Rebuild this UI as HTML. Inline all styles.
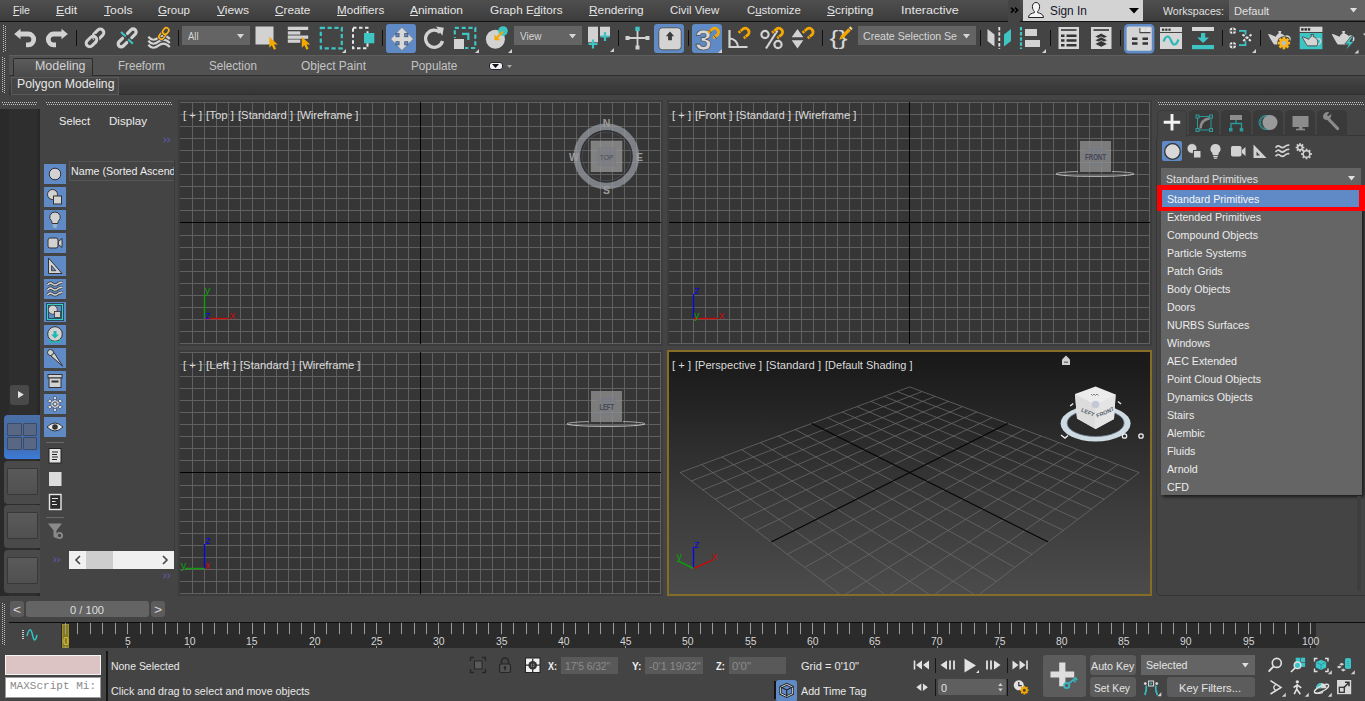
<!DOCTYPE html>
<html><head><meta charset="utf-8"><title>3ds Max</title>
<style>
html,body{margin:0;padding:0;background:#444;}
body{width:1365px;height:701px;position:relative;overflow:hidden;font-family:"Liberation Sans",sans-serif;font-size:12px;color:#dedede;}
div,span.t,svg{position:absolute;box-sizing:border-box;}
span.t{white-space:nowrap;line-height:1.15;transform-origin:0 0;display:block;}
svg{overflow:visible;}
.sec{left:0;top:0;width:0;height:0;}
u{text-decoration:underline;text-underline-offset:1px;}
</style></head><body>
<div class="sec" id="menubar">
<div style="left:0px;top:0px;width:1365px;height:21px;background:linear-gradient(#4f4f4f,#3c3c3c);"></div>
<div style="left:0px;top:21px;width:1008px;height:1px;background:#111;"></div>
<div style="left:1008px;top:0px;width:12px;height:22px;background:#444;"></div>
<div style="left:1020px;top:21px;width:345px;height:1px;background:#111;"></div>
<span class="t" style="left:12.8px;top:4px;font-size:11.5px;color:#e4e4e4;transform:scaleX(0.912)"><u>F</u>ile</span>
<span class="t" style="left:55.6px;top:4px;font-size:11.5px;color:#e4e4e4;transform:scaleX(1.070)"><u>E</u>dit</span>
<span class="t" style="left:103.5px;top:4px;font-size:11.5px;color:#e4e4e4;transform:scaleX(1.062)"><u>T</u>ools</span>
<span class="t" style="left:158.4px;top:4px;font-size:11.5px;color:#e4e4e4;transform:scaleX(1.001)"><u>G</u>roup</span>
<span class="t" style="left:217.4px;top:4px;font-size:11.5px;color:#e4e4e4;transform:scaleX(1.050)"><u>V</u>iews</span>
<span class="t" style="left:275.4px;top:4px;font-size:11.5px;color:#e4e4e4;transform:scaleX(1.026)"><u>C</u>reate</span>
<span class="t" style="left:337px;top:4px;font-size:11.5px;color:#e4e4e4;transform:scaleX(1.012)"><u>M</u>odifiers</span>
<span class="t" style="left:410px;top:4px;font-size:11.5px;color:#e4e4e4;transform:scaleX(1.036)"><u>A</u>nimation</span>
<span class="t" style="left:490.3px;top:4px;font-size:11.5px;color:#e4e4e4;transform:scaleX(1.022)">Graph E<u>d</u>itors</span>
<span class="t" style="left:589px;top:4px;font-size:11.5px;color:#e4e4e4;transform:scaleX(1.031)"><u>R</u>endering</span>
<span class="t" style="left:670.3px;top:4px;font-size:11.5px;color:#e4e4e4;transform:scaleX(0.991)">Civil View</span>
<span class="t" style="left:746.5px;top:4px;font-size:11.5px;color:#e4e4e4;transform:scaleX(0.992)">C<u>u</u>stomize</span>
<span class="t" style="left:827.4px;top:4px;font-size:11.5px;color:#e4e4e4;transform:scaleX(1.039)"><u>S</u>cripting</span>
<span class="t" style="left:900.8px;top:4px;font-size:11.5px;color:#e4e4e4;transform:scaleX(1.088)">Interactive</span>
<svg style="left:1009.500px;top:7.200px" width="10" height="7" viewBox="0 0 10 7"><path d="M1 .600l2.700 2.500-2.700 2.500M5 .600l2.700 2.500-2.700 2.500" fill="none" stroke="#000" stroke-width="1.500"/></svg>
<div style="left:1023px;top:0px;width:120px;height:21px;background:#d3d3d3;"></div>
<span class="t" style="left:1049.5px;top:4px;font-size:12.5px;color:#15152a;transform:scaleX(0.946);">Sign In</span>
<svg style="left:1027px;top:1px" width="18" height="18" viewBox="0 0 18 18"><path d="M9 1.5c2.3 0 3.6 1.8 3.6 4.2 0 2-.9 3.8-2 4.7v1.2c2.500.8 5 1.500 5.600 3.400l.3 1.500H1.500l.3-1.500c.6-1.900 3.100-2.600 5.600-3.400v-1.200c-1.100-.9-2-2.700-2-4.700 0-2.400 1.300-4.200 3.600-4.200z" fill="#f4f4f4" stroke="#222" stroke-width="1"/></svg>
<svg style="left:1129px;top:8px" width="10" height="6"><path d="M0 0h10l-5 5.500z" fill="#000"/></svg>
<span class="t" style="left:1163.0px;top:5px;font-size:11.5px;color:#e0e0e0;transform:scaleX(0.921);">Workspaces:</span>
<div style="left:1229px;top:0px;width:136px;height:20px;background:#646464;"></div>
<span class="t" style="left:1233.5px;top:5px;font-size:11.5px;color:#e0e0e0;transform:scaleX(0.966);">Default</span>
<svg style="left:1350px;top:8px" width="7" height="5"><path d="M0 0h7l-3.500 4.500z" fill="#e0e0e0"/></svg>
</div>
<div class="sec" id="main-toolbar">
<div style="left:3px;top:25px;width:3px;height:27px;background-image:repeating-linear-gradient(#c2c2c2 0,#c2c2c2 1px,transparent 1px,transparent 2px),repeating-linear-gradient(transparent 0,transparent 1px,#c2c2c2 1px,#c2c2c2 2px);background-size:1px 100%,1px 100%;background-position:0 0,2px 0;background-repeat:no-repeat"></div>
<div style="left:75.8px;top:30px;width:1.2px;height:16px;background:#101010;"></div>
<div style="left:178px;top:30px;width:1.2px;height:16px;background:#101010;"></div>
<div style="left:381.8px;top:30px;width:1.2px;height:16px;background:#101010;"></div>
<div style="left:617.8px;top:30px;width:1.2px;height:16px;background:#101010;"></div>
<div style="left:687.8px;top:30px;width:1.2px;height:16px;background:#101010;"></div>
<div style="left:822px;top:30px;width:1.2px;height:16px;background:#101010;"></div>
<div style="left:979.8px;top:30px;width:1.2px;height:16px;background:#101010;"></div>
<div style="left:1050px;top:30px;width:1.2px;height:16px;background:#101010;"></div>
<div style="left:1119.8px;top:30px;width:1.2px;height:16px;background:#101010;"></div>
<div style="left:1222px;top:30px;width:1.2px;height:16px;background:#101010;"></div>
<div style="left:1260px;top:30px;width:1.2px;height:16px;background:#101010;"></div>
<div style="left:182px;top:26px;width:68px;height:19px;background:#646464;"></div>
<span class="t" style="left:188.0px;top:30px;font-size:11.5px;color:#d6d6d6;transform:scaleX(0.822);">All</span>
<svg style="left:236.5px;top:33.5px" width="7" height="5"><path d="M0 0h7l-3.500 4.500z" fill="#d6d6d6"/></svg>
<div style="left:514px;top:26px;width:68px;height:19px;background:#646464;"></div>
<span class="t" style="left:519.7px;top:30px;font-size:11.5px;color:#d6d6d6;transform:scaleX(0.862);">View</span>
<svg style="left:569px;top:33.5px" width="7" height="5"><path d="M0 0h7l-3.500 4.500z" fill="#d6d6d6"/></svg>
<div style="left:858px;top:26px;width:118px;height:19px;background:#646464;"></div>
<span class="t" style="left:862.5px;top:30px;font-size:11.5px;color:#d6d6d6;transform:scaleX(0.919);">Create Selection Se</span>
<svg style="left:963px;top:33.5px" width="7" height="5"><path d="M0 0h7l-3.500 4.500z" fill="#d6d6d6"/></svg>
</div>
<div class="sec" id="ribbon">
<div style="left:9px;top:55px;width:1356px;height:1px;background:#5e5e5e;"></div>
<div style="left:9px;top:56px;width:1356px;height:20px;background:#525252;"></div>
<div style="left:9px;top:75px;width:1356px;height:1px;background:#2e2e2e;"></div>
<div style="left:9px;top:76px;width:1356px;height:18px;background:linear-gradient(#474747,#3c3c3c 55%,#363636);"></div>
<div style="left:9px;top:94px;width:1356px;height:1px;background:#303030;"></div>
<div style="left:2px;top:57px;width:3px;height:36px;background-image:repeating-linear-gradient(#c2c2c2 0,#c2c2c2 1px,transparent 1px,transparent 2px),repeating-linear-gradient(transparent 0,transparent 1px,#c2c2c2 1px,#c2c2c2 2px);background-size:1px 100%,1px 100%;background-position:0 0,2px 0;background-repeat:no-repeat"></div>
<div style="left:13px;top:58px;width:80px;height:18px;background:linear-gradient(#5c5c5c,#4a4a4a);border:1px solid #2a2a2a;border-bottom:none;border-radius:2px 2px 0 0"></div>
<span class="t" style="left:34.5px;top:60px;font-size:12px;color:#d4d4d4;transform:scaleX(1.037);">Modeling</span>
<span class="t" style="left:117.5px;top:60px;font-size:12px;color:#c4c4c4;transform:scaleX(0.966);">Freeform</span>
<span class="t" style="left:208.9px;top:60px;font-size:12px;color:#c4c4c4;transform:scaleX(0.970);">Selection</span>
<span class="t" style="left:301.0px;top:60px;font-size:12px;color:#c4c4c4;transform:scaleX(0.994);">Object Paint</span>
<span class="t" style="left:410.6px;top:60px;font-size:12px;color:#c4c4c4;transform:scaleX(0.979);">Populate</span>
<div style="left:488.5px;top:61.5px;width:14px;height:8px;background:#f0f0f0;border-radius:3px;border:1px solid #223"></div>
<svg style="left:492px;top:63.500px" width="7" height="4"><path d="M0 0h7l-3.500 4z" fill="#111"/></svg>
<svg style="left:507px;top:65px" width="5" height="3"><path d="M0 0h5l-2.500 3z" fill="#aaa"/></svg>
<div style="left:11px;top:76.5px;width:108px;height:18px;background:#464646;border:1px solid #5a5a5a"></div>
<span class="t" style="left:16.5px;top:78px;font-size:12px;color:#e6e6e6;transform:scaleX(1.022);">Polygon Modeling</span>
<div style="left:2px;top:102px;width:35px;height:3px;background-image:repeating-linear-gradient(90deg,#c2c2c2 0,#c2c2c2 1px,transparent 1px,transparent 2px),repeating-linear-gradient(90deg,transparent 0,transparent 1px,#c2c2c2 1px,#c2c2c2 2px);background-size:100% 1px,100% 1px;background-position:0 0,0 2px;background-repeat:no-repeat"></div>
<div style="left:46px;top:102px;width:126px;height:3px;background-image:repeating-linear-gradient(90deg,#c2c2c2 0,#c2c2c2 1px,transparent 1px,transparent 2px),repeating-linear-gradient(90deg,transparent 0,transparent 1px,#c2c2c2 1px,#c2c2c2 2px);background-size:100% 1px,100% 1px;background-position:0 0,0 2px;background-repeat:no-repeat"></div>
<div style="left:1158px;top:102px;width:206px;height:3px;background-image:repeating-linear-gradient(90deg,#c2c2c2 0,#c2c2c2 1px,transparent 1px,transparent 2px),repeating-linear-gradient(90deg,transparent 0,transparent 1px,#c2c2c2 1px,#c2c2c2 2px);background-size:100% 1px,100% 1px;background-position:0 0,0 2px;background-repeat:no-repeat"></div>
</div>
<div class="sec" id="viewport-layout-tabs">
<div style="left:0px;top:109px;width:40px;height:487px;background:linear-gradient(90deg,#2a2a2a 0,#2a2a2a 9px,#2e2e2e 9px,#2e2e2e 36px,#252525 40px);"></div>
<div style="left:9.5px;top:385px;width:19.5px;height:19.5px;background:#494949;border-radius:3px"></div>
<svg style="left:17.500px;top:391px" width="6" height="8"><path d="M0 0l5.800 3.600-5.800 3.600z" fill="#e2e2e2"/></svg>
<div style="left:4px;top:415px;width:36px;height:44px;background:linear-gradient(#4b6fa6,#426cab 70%,#3b7cdc);border-radius:4px 0 0 4px"></div>
<div style="left:7px;top:423px;width:14.5px;height:13px;background:#586783;border:1px solid #3d4a66;border-radius:1px"></div>
<div style="left:22.5px;top:423px;width:14.5px;height:13px;background:#586783;border:1px solid #3d4a66;border-radius:1px"></div>
<div style="left:7px;top:437px;width:14.5px;height:13px;background:#586783;border:1px solid #3d4a66;border-radius:1px"></div>
<div style="left:22.5px;top:437px;width:14.5px;height:13px;background:#586783;border:1px solid #3d4a66;border-radius:1px"></div>
<div style="left:4px;top:461px;width:36px;height:43px;background:#4a4a4a;border-radius:4px 0 0 4px"></div>
<div style="left:7px;top:468px;width:31px;height:27px;background:linear-gradient(#5a5a5a,#505050);border:1px solid #383838;border-radius:1px"></div>
<div style="left:4px;top:505px;width:36px;height:43px;background:#4a4a4a;border-radius:4px 0 0 4px"></div>
<div style="left:7px;top:512px;width:31px;height:27px;background:linear-gradient(#5a5a5a,#505050);border:1px solid #383838;border-radius:1px"></div>
<div style="left:4px;top:550px;width:36px;height:43px;background:#4a4a4a;border-radius:4px 0 0 4px"></div>
<div style="left:7px;top:557px;width:31px;height:27px;background:linear-gradient(#5a5a5a,#505050);border:1px solid #383838;border-radius:1px"></div>
</div>
<div class="sec" id="scene-explorer">
<span class="t" style="left:59.0px;top:115px;font-size:11.5px;color:#ececec;transform:scaleX(0.970);">Select</span>
<span class="t" style="left:109.0px;top:115px;font-size:11.5px;color:#ececec;transform:scaleX(1.008);">Display</span>
<svg style="left:163px;top:137px" width="8" height="6" viewBox="0 0 8 6"><path d="M.6.600l2.400 2.200-2.400 2.200M4.400.600l2.400 2.200-2.400 2.200" fill="none" stroke="#56569a" stroke-width="1.200"/></svg>
<svg style="left:53px;top:557px" width="8" height="6" viewBox="0 0 8 6"><path d="M.6.600l2.400 2.200-2.400 2.200M4.400.600l2.400 2.200-2.400 2.200" fill="none" stroke="#56569a" stroke-width="1.200"/></svg>
<svg style="left:163px;top:573px" width="8" height="6" viewBox="0 0 8 6"><path d="M.6.600l2.400 2.200-2.400 2.200M4.400.600l2.400 2.200-2.400 2.200" fill="none" stroke="#56569a" stroke-width="1.200"/></svg>
<div style="left:69px;top:160.5px;width:105px;height:20px;background:#444444;border:1px solid #565656;border-right:none;overflow:hidden"></div>
<div style="left:69px;top:160px;width:105px;height:22px;overflow:hidden;background:none">
<span class="t" style="left:2.2px;top:5px;font-size:11.5px;color:#ececec;transform:scaleX(0.929);">Name (Sorted Ascending)</span>
</div>
<div style="left:173.5px;top:160px;width:1px;height:392px;background:#3a3a3a;"></div>
<div style="left:44px;top:164px;width:22px;height:20px;background:#5f8ac5;"></div>
<div style="left:44px;top:187px;width:22px;height:20px;background:#5f8ac5;"></div>
<div style="left:44px;top:210px;width:22px;height:20px;background:#5f8ac5;"></div>
<div style="left:44px;top:233px;width:22px;height:20px;background:#5f8ac5;"></div>
<div style="left:44px;top:256px;width:22px;height:20px;background:#5f8ac5;"></div>
<div style="left:44px;top:279px;width:22px;height:20px;background:#5f8ac5;"></div>
<div style="left:44px;top:302px;width:22px;height:20px;background:#5f8ac5;"></div>
<div style="left:44px;top:325px;width:22px;height:20px;background:#5f8ac5;"></div>
<div style="left:44px;top:348px;width:22px;height:20px;background:#5f8ac5;"></div>
<div style="left:44px;top:371px;width:22px;height:20px;background:#5f8ac5;"></div>
<div style="left:44px;top:394px;width:22px;height:20px;background:#5f8ac5;"></div>
<div style="left:44px;top:417px;width:22px;height:20px;background:#5f8ac5;"></div>
<div style="left:46px;top:441.5px;width:18px;height:1px;background:#6a6a6a;"></div>
<div style="left:46px;top:517px;width:18px;height:1px;background:#6a6a6a;"></div>
<div style="left:69px;top:551px;width:105px;height:17.5px;background:#f0f0f0;"></div>
<div style="left:86px;top:551px;width:27px;height:17.5px;background:#cdcdcd;"></div>
<svg style="left:75px;top:555px" width="6" height="10"><path d="M5 1L1 5l4 4" fill="none" stroke="#444" stroke-width="1.600"/></svg>
<svg style="left:162px;top:555px" width="6" height="10"><path d="M1 1l4 4-4 4" fill="none" stroke="#444" stroke-width="1.600"/></svg>
</div>
<div class="sec" id="viewports">
<div style="left:178px;top:100px;width:485px;height:246px;background:#3c3c3c"></div>
<div style="left:180px;top:102px;width:481px;height:242px;background:#363636"></div>
<svg style="left:180px;top:102px" width="481" height="242" viewBox="0 0 481 242" shape-rendering="crispEdges"><path d="M12.5 0V242M24.5 0V242M36.5 0V242M48.5 0V242M60.5 0V242M72.5 0V242M84.5 0V242M96.5 0V242M108.5 0V242M120.5 0V242M132.5 0V242M144.5 0V242M156.5 0V242M168.5 0V242M180.5 0V242M192.5 0V242M204.5 0V242M216.5 0V242M228.5 0V242M252.5 0V242M264.5 0V242M276.5 0V242M288.5 0V242M300.5 0V242M312.5 0V242M324.5 0V242M336.5 0V242M348.5 0V242M360.5 0V242M372.5 0V242M384.5 0V242M396.5 0V242M408.5 0V242M420.5 0V242M432.5 0V242M444.5 0V242M456.5 0V242M468.5 0V242M480.5 0V242M0 108.5H481M0 96.5H481M0 84.5H481M0 72.5H481M0 60.5H481M0 48.5H481M0 36.5H481M0 24.5H481M0 12.5H481M0 0.5H481M0 133.5H481M0 145.5H481M0 157.5H481M0 169.5H481M0 181.5H481M0 193.5H481M0 205.5H481M0 217.5H481M0 229.5H481M0 241.5H481" stroke="#606060" stroke-width="1" fill="none"/><path d="M240.5 0V242M0 120.5H481" stroke="#000" stroke-width="1" fill="none"/></svg>
<div style="left:667px;top:100px;width:485px;height:246px;background:#3c3c3c"></div>
<div style="left:669px;top:102px;width:481px;height:242px;background:#363636"></div>
<svg style="left:669px;top:102px" width="481" height="242" viewBox="0 0 481 242" shape-rendering="crispEdges"><path d="M12.5 0V242M24.5 0V242M36.5 0V242M48.5 0V242M60.5 0V242M72.5 0V242M84.5 0V242M96.5 0V242M108.5 0V242M120.5 0V242M132.5 0V242M144.5 0V242M156.5 0V242M168.5 0V242M180.5 0V242M192.5 0V242M204.5 0V242M216.5 0V242M228.5 0V242M252.5 0V242M264.5 0V242M276.5 0V242M288.5 0V242M300.5 0V242M312.5 0V242M324.5 0V242M336.5 0V242M348.5 0V242M360.5 0V242M372.5 0V242M384.5 0V242M396.5 0V242M408.5 0V242M420.5 0V242M432.5 0V242M444.5 0V242M456.5 0V242M468.5 0V242M480.5 0V242M0 108.5H481M0 96.5H481M0 84.5H481M0 72.5H481M0 60.5H481M0 48.5H481M0 36.5H481M0 24.5H481M0 12.5H481M0 0.5H481M0 133.5H481M0 145.5H481M0 157.5H481M0 169.5H481M0 181.5H481M0 193.5H481M0 205.5H481M0 217.5H481M0 229.5H481M0 241.5H481" stroke="#606060" stroke-width="1" fill="none"/><path d="M240.5 0V242M0 120.5H481" stroke="#000" stroke-width="1" fill="none"/></svg>
<div style="left:178px;top:350px;width:485px;height:246px;background:#3c3c3c"></div>
<div style="left:180px;top:352px;width:481px;height:242px;background:#363636"></div>
<svg style="left:180px;top:352px" width="481" height="242" viewBox="0 0 481 242" shape-rendering="crispEdges"><path d="M12.5 0V242M24.5 0V242M36.5 0V242M48.5 0V242M60.5 0V242M72.5 0V242M84.5 0V242M96.5 0V242M108.5 0V242M120.5 0V242M132.5 0V242M144.5 0V242M156.5 0V242M168.5 0V242M180.5 0V242M192.5 0V242M204.5 0V242M216.5 0V242M228.5 0V242M252.5 0V242M264.5 0V242M276.5 0V242M288.5 0V242M300.5 0V242M312.5 0V242M324.5 0V242M336.5 0V242M348.5 0V242M360.5 0V242M372.5 0V242M384.5 0V242M396.5 0V242M408.5 0V242M420.5 0V242M432.5 0V242M444.5 0V242M456.5 0V242M468.5 0V242M480.5 0V242M0 108.5H481M0 96.5H481M0 84.5H481M0 72.5H481M0 60.5H481M0 48.5H481M0 36.5H481M0 24.5H481M0 12.5H481M0 0.5H481M0 133.5H481M0 145.5H481M0 157.5H481M0 169.5H481M0 181.5H481M0 193.5H481M0 205.5H481M0 217.5H481M0 229.5H481M0 241.5H481" stroke="#606060" stroke-width="1" fill="none"/><path d="M240.5 0V242M0 120.5H481" stroke="#000" stroke-width="1" fill="none"/></svg>
<div style="left:667px;top:350px;width:485px;height:246px;background:#866d27;"></div>
<div style="left:669px;top:352px;width:481px;height:242px;background:linear-gradient(#191919 0,#1c1c1c 8%,#2b2b2b 35%,#3c3c3c 65%,#4b4b4b 100%);"></div>
<span class="t" style="left:183.4px;top:109px;font-size:11.5px;color:#dadada;transform:scaleX(0.975);">[ + ]</span>
<span class="t" style="left:205.5px;top:109px;font-size:11.5px;color:#dadada;transform:scaleX(0.996);">[Top ]</span>
<span class="t" style="left:237.5px;top:109px;font-size:11.5px;color:#dadada;transform:scaleX(0.978);">[Standard ]</span>
<span class="t" style="left:296.5px;top:109px;font-size:11.5px;color:#dadada;transform:scaleX(0.982);">[Wireframe ]</span>
<span class="t" style="left:672.4px;top:109px;font-size:11.5px;color:#dadada;transform:scaleX(0.975);">[ + ]</span>
<span class="t" style="left:694.5px;top:109px;font-size:11.5px;color:#dadada;transform:scaleX(1.029);">[Front ]</span>
<span class="t" style="left:736.0px;top:109px;font-size:11.5px;color:#dadada;transform:scaleX(0.978);">[Standard ]</span>
<span class="t" style="left:795.0px;top:109px;font-size:11.5px;color:#dadada;transform:scaleX(0.982);">[Wireframe ]</span>
<span class="t" style="left:183.4px;top:359px;font-size:11.5px;color:#dadada;transform:scaleX(0.975);">[ + ]</span>
<span class="t" style="left:205.5px;top:359px;font-size:11.5px;color:#dadada;transform:scaleX(1.043);">[Left ]</span>
<span class="t" style="left:239.5px;top:359px;font-size:11.5px;color:#dadada;transform:scaleX(0.978);">[Standard ]</span>
<span class="t" style="left:298.5px;top:359px;font-size:11.5px;color:#dadada;transform:scaleX(0.982);">[Wireframe ]</span>
<span class="t" style="left:672.4px;top:359px;font-size:11.5px;color:#dadada;transform:scaleX(0.975);">[ + ]</span>
<span class="t" style="left:694.5px;top:359px;font-size:11.5px;color:#dadada;transform:scaleX(0.962);">[Perspective ]</span>
<span class="t" style="left:765.5px;top:359px;font-size:11.5px;color:#dadada;transform:scaleX(0.978);">[Standard ]</span>
<span class="t" style="left:824.5px;top:359px;font-size:11.5px;color:#dadada;transform:scaleX(0.957);">[Default Shading ]</span>
</div>
<div class="sec" id="command-panel">
<div style="left:1156px;top:135px;width:230px;height:461px;background:none;border:1px solid #363636;border-radius:5px 0 0 5px"></div>
<div style="left:1157px;top:109.5px;width:30px;height:27px;background:#444444;border-radius:5px 5px 0 0;border:1px solid #3a3a3a;border-bottom:none"></div>
<div style="left:1188.5px;top:110px;width:30px;height:25.5px;background:#3a3a3a;border-radius:5px 5px 0 0"></div>
<div style="left:1220.5px;top:110px;width:30px;height:25.5px;background:#3a3a3a;border-radius:5px 5px 0 0"></div>
<div style="left:1252.5px;top:110px;width:30px;height:25.5px;background:#3a3a3a;border-radius:5px 5px 0 0"></div>
<div style="left:1284.5px;top:110px;width:30px;height:25.5px;background:#3a3a3a;border-radius:5px 5px 0 0"></div>
<div style="left:1316.5px;top:110px;width:30px;height:25.5px;background:#3a3a3a;border-radius:5px 5px 0 0"></div>
<div style="left:1162px;top:141px;width:20px;height:20px;background:#5f8ac5;border-radius:2px"></div>
<div style="left:1161px;top:168px;width:200px;height:20px;background:#646464;"></div>
<span class="t" style="left:1165.5px;top:173px;font-size:11.5px;color:#e0e0e0;transform:scaleX(0.923);">Standard Primitives</span>
<svg style="left:1348px;top:176px" width="7" height="5"><path d="M0 0h7l-3.500 4.500z" fill="#e0e0e0"/></svg>
<div style="left:1161px;top:188px;width:201px;height:307px;background:#656565;box-shadow:2px 2px 3px rgba(0,0,0,.6)"></div>
<div style="left:1356.5px;top:496px;width:4.5px;height:95px;background:#3e3e3e;"></div>
<div style="left:1157px;top:185.2px;width:212px;height:26.2px;background:#fe0000;"></div>
<div style="left:1162px;top:190px;width:197px;height:17px;background:#5f8ac5;"></div>
<span class="t" style="left:1166.8px;top:193px;font-size:11.5px;color:#f4f4f4;transform:scaleX(0.926);">Standard Primitives</span>
<span class="t" style="left:1166.8px;top:211px;font-size:11.5px;color:#ececec;transform:scaleX(0.926);">Extended Primitives</span>
<span class="t" style="left:1166.8px;top:229px;font-size:11.5px;color:#ececec;transform:scaleX(0.926);">Compound Objects</span>
<span class="t" style="left:1166.8px;top:247px;font-size:11.5px;color:#ececec;transform:scaleX(0.926);">Particle Systems</span>
<span class="t" style="left:1166.8px;top:265px;font-size:11.5px;color:#ececec;transform:scaleX(0.926);">Patch Grids</span>
<span class="t" style="left:1166.8px;top:283px;font-size:11.5px;color:#ececec;transform:scaleX(0.926);">Body Objects</span>
<span class="t" style="left:1166.8px;top:301px;font-size:11.5px;color:#ececec;transform:scaleX(0.926);">Doors</span>
<span class="t" style="left:1166.8px;top:319px;font-size:11.5px;color:#ececec;transform:scaleX(0.926);">NURBS Surfaces</span>
<span class="t" style="left:1166.8px;top:337px;font-size:11.5px;color:#ececec;transform:scaleX(0.926);">Windows</span>
<span class="t" style="left:1166.8px;top:355px;font-size:11.5px;color:#ececec;transform:scaleX(0.926);">AEC Extended</span>
<span class="t" style="left:1166.8px;top:373px;font-size:11.5px;color:#ececec;transform:scaleX(0.926);">Point Cloud Objects</span>
<span class="t" style="left:1166.8px;top:391px;font-size:11.5px;color:#ececec;transform:scaleX(0.926);">Dynamics Objects</span>
<span class="t" style="left:1166.8px;top:409px;font-size:11.5px;color:#ececec;transform:scaleX(0.926);">Stairs</span>
<span class="t" style="left:1166.8px;top:427px;font-size:11.5px;color:#ececec;transform:scaleX(0.926);">Alembic</span>
<span class="t" style="left:1166.8px;top:445px;font-size:11.5px;color:#ececec;transform:scaleX(0.926);">Fluids</span>
<span class="t" style="left:1166.8px;top:463px;font-size:11.5px;color:#ececec;transform:scaleX(0.926);">Arnold</span>
<span class="t" style="left:1166.8px;top:481px;font-size:11.5px;color:#ececec;transform:scaleX(0.926);">CFD</span>
</div>
<div class="sec" id="timeline">
<div style="left:2px;top:603px;width:3px;height:42px;background-image:repeating-linear-gradient(#c2c2c2 0,#c2c2c2 1px,transparent 1px,transparent 2px),repeating-linear-gradient(transparent 0,transparent 1px,#c2c2c2 1px,#c2c2c2 2px);background-size:1px 100%,1px 100%;background-position:0 0,2px 0;background-repeat:no-repeat"></div>
<div style="left:10px;top:601px;width:14px;height:16px;background:#5c5c5c;border-radius:3px"></div>
<div style="left:151px;top:601px;width:14px;height:16px;background:#5c5c5c;border-radius:3px"></div>
<div style="left:26px;top:601px;width:123px;height:16px;background:#646464;border-radius:3px"></div>
<span class="t" style="left:12.5px;top:603px;font-size:13px;color:#d8d8d8;transform:scaleX(1.054);">&lt;</span>
<span class="t" style="left:154.0px;top:603px;font-size:13px;color:#d8d8d8;transform:scaleX(1.054);">&gt;</span>
<span class="t" style="left:69.5px;top:604px;font-size:11.5px;color:#dedede;transform:scaleX(0.967);">0 / 100</span>
<div style="left:9px;top:621.5px;width:1356px;height:1.4px;background:#0c0c0c;"></div>
<div style="left:61px;top:623px;width:1255px;height:24.5px;background:#2b2b2b;"></div>
<div style="left:62px;top:623.5px;width:7px;height:24px;background:#8a7a1e;border:1px solid #a08f2a"></div>
<svg style="left:0;top:622px" width="1365" height="27"><path d="M65.50 0.8v11.4M65.50 24v2M77.50 0.8v11.4M90.50 0.8v11.4M102.50 0.8v11.4M115.50 0.8v11.4M127.50 0.8v11.4M127.50 24v2M140.50 0.8v11.4M152.50 0.8v11.4M165.50 0.8v11.4M177.50 0.8v11.4M189.50 0.8v11.4M189.50 24v2M202.50 0.8v11.4M214.50 0.8v11.4M227.50 0.8v11.4M239.50 0.8v11.4M252.50 0.8v11.4M252.50 24v2M264.50 0.8v11.4M277.50 0.8v11.4M289.50 0.8v11.4M301.50 0.8v11.4M314.50 0.8v11.4M314.50 24v2M326.50 0.8v11.4M339.50 0.8v11.4M351.50 0.8v11.4M364.50 0.8v11.4M376.50 0.8v11.4M376.50 24v2M389.50 0.8v11.4M401.50 0.8v11.4M414.50 0.8v11.4M426.50 0.8v11.4M438.50 0.8v11.4M438.50 24v2M451.50 0.8v11.4M463.50 0.8v11.4M476.50 0.8v11.4M488.50 0.8v11.4M501.50 0.8v11.4M501.50 24v2M513.50 0.8v11.4M526.50 0.8v11.4M538.50 0.8v11.4M551.50 0.8v11.4M563.50 0.8v11.4M563.50 24v2M575.50 0.8v11.4M588.50 0.8v11.4M600.50 0.8v11.4M613.50 0.8v11.4M625.50 0.8v11.4M625.50 24v2M638.50 0.8v11.4M650.50 0.8v11.4M663.50 0.8v11.4M675.50 0.8v11.4M688.50 0.8v11.4M688.50 24v2M700.50 0.8v11.4M712.50 0.8v11.4M725.50 0.8v11.4M737.50 0.8v11.4M750.50 0.8v11.4M750.50 24v2M762.50 0.8v11.4M775.50 0.8v11.4M787.50 0.8v11.4M800.50 0.8v11.4M812.50 0.8v11.4M812.50 24v2M824.50 0.8v11.4M837.50 0.8v11.4M849.50 0.8v11.4M862.50 0.8v11.4M874.50 0.8v11.4M874.50 24v2M887.50 0.8v11.4M899.50 0.8v11.4M912.50 0.8v11.4M924.50 0.8v11.4M937.50 0.8v11.4M937.50 24v2M949.50 0.8v11.4M961.50 0.8v11.4M974.50 0.8v11.4M986.50 0.8v11.4M999.50 0.8v11.4M999.50 24v2M1011.50 0.8v11.4M1024.50 0.8v11.4M1036.50 0.8v11.4M1049.50 0.8v11.4M1061.50 0.8v11.4M1061.50 24v2M1074.50 0.8v11.4M1086.50 0.8v11.4M1098.50 0.8v11.4M1111.50 0.8v11.4M1123.50 0.8v11.4M1123.50 24v2M1136.50 0.8v11.4M1148.50 0.8v11.4M1161.50 0.8v11.4M1173.50 0.8v11.4M1186.50 0.8v11.4M1186.50 24v2M1198.50 0.8v11.4M1210.50 0.8v11.4M1223.50 0.8v11.4M1235.50 0.8v11.4M1248.50 0.8v11.4M1248.50 24v2M1260.50 0.8v11.4M1273.50 0.8v11.4M1285.50 0.8v11.4M1298.50 0.8v11.4M1310.50 0.8v11.4M1310.50 24v2" stroke="#9c9c9c" stroke-width="1" fill="none"/></svg>
<span class="t" style="left:62.5px;top:635px;font-size:11.5px;color:#d9c95a;transform:scaleX(0.900);">0</span>
<span class="t" style="left:124.8px;top:635px;font-size:11.5px;color:#d6d6d6;transform:scaleX(0.900);">5</span>
<span class="t" style="left:184.2px;top:635px;font-size:11.5px;color:#d6d6d6;transform:scaleX(0.900);">10</span>
<span class="t" style="left:246.4px;top:635px;font-size:11.5px;color:#d6d6d6;transform:scaleX(0.900);">15</span>
<span class="t" style="left:308.7px;top:635px;font-size:11.5px;color:#d6d6d6;transform:scaleX(0.900);">20</span>
<span class="t" style="left:370.9px;top:635px;font-size:11.5px;color:#d6d6d6;transform:scaleX(0.900);">25</span>
<span class="t" style="left:433.2px;top:635px;font-size:11.5px;color:#d6d6d6;transform:scaleX(0.900);">30</span>
<span class="t" style="left:495.5px;top:635px;font-size:11.5px;color:#d6d6d6;transform:scaleX(0.900);">35</span>
<span class="t" style="left:557.7px;top:635px;font-size:11.5px;color:#d6d6d6;transform:scaleX(0.900);">40</span>
<span class="t" style="left:620.0px;top:635px;font-size:11.5px;color:#d6d6d6;transform:scaleX(0.900);">45</span>
<span class="t" style="left:682.2px;top:635px;font-size:11.5px;color:#d6d6d6;transform:scaleX(0.900);">50</span>
<span class="t" style="left:744.5px;top:635px;font-size:11.5px;color:#d6d6d6;transform:scaleX(0.900);">55</span>
<span class="t" style="left:806.8px;top:635px;font-size:11.5px;color:#d6d6d6;transform:scaleX(0.900);">60</span>
<span class="t" style="left:869.0px;top:635px;font-size:11.5px;color:#d6d6d6;transform:scaleX(0.900);">65</span>
<span class="t" style="left:931.3px;top:635px;font-size:11.5px;color:#d6d6d6;transform:scaleX(0.900);">70</span>
<span class="t" style="left:993.5px;top:635px;font-size:11.5px;color:#d6d6d6;transform:scaleX(0.900);">75</span>
<span class="t" style="left:1055.8px;top:635px;font-size:11.5px;color:#d6d6d6;transform:scaleX(0.900);">80</span>
<span class="t" style="left:1118.1px;top:635px;font-size:11.5px;color:#d6d6d6;transform:scaleX(0.900);">85</span>
<span class="t" style="left:1180.3px;top:635px;font-size:11.5px;color:#d6d6d6;transform:scaleX(0.900);">90</span>
<span class="t" style="left:1242.6px;top:635px;font-size:11.5px;color:#d6d6d6;transform:scaleX(0.900);">95</span>
<span class="t" style="left:1302.0px;top:635px;font-size:11.5px;color:#d6d6d6;transform:scaleX(0.900);">100</span>
</div>
<div class="sec" id="status-bar">
<div style="left:5px;top:654.5px;width:96px;height:20px;background:#dcc4c4;border:1px solid #f4f4f4"></div>
<div style="left:5px;top:676.5px;width:96px;height:21.5px;background:#ffffff;border:1px solid #9a9a9a"></div>
<span class="t" style="left:10.0px;top:679px;font-size:11.5px;color:#8a8a8a;font-family:'Liberation Mono',monospace;transform:scaleX(0.959);">MAXScript Mi:</span>
<div style="left:106px;top:651px;width:2px;height:50px;background:#161616;"></div>
<span class="t" style="left:110.6px;top:660px;font-size:11.5px;color:#e8e8e8;transform:scaleX(0.909);">None Selected</span>
<span class="t" style="left:110.6px;top:685px;font-size:11.5px;color:#e8e8e8;transform:scaleX(0.933);">Click and drag to select and move objects</span>
<span class="t" style="left:548.0px;top:660px;font-size:11.5px;color:#f0f0f0;font-weight:bold;transform:scaleX(0.783);">X:</span>
<span class="t" style="left:631.5px;top:660px;font-size:11.5px;color:#f0f0f0;font-weight:bold;transform:scaleX(0.892);">Y:</span>
<span class="t" style="left:716.0px;top:660px;font-size:11.5px;color:#f0f0f0;font-weight:bold;transform:scaleX(0.829);">Z:</span>
<div style="left:560.5px;top:657px;width:57.5px;height:17px;background:#595959;"></div>
<span class="t" style="left:565.0px;top:660px;font-size:11.5px;color:#8c8c8c;transform:scaleX(0.882);">17'5 6/32"</span>
<div style="left:645px;top:657px;width:57.5px;height:17px;background:#595959;"></div>
<span class="t" style="left:648.5px;top:660px;font-size:11.5px;color:#8c8c8c;transform:scaleX(0.939);">-0'1 19/32"</span>
<div style="left:728.6px;top:657px;width:57.69999999999993px;height:17px;background:#595959;"></div>
<span class="t" style="left:732.0px;top:660px;font-size:11.5px;color:#8c8c8c;transform:scaleX(0.996);">0'0"</span>
<span class="t" style="left:801.4px;top:660px;font-size:11.5px;color:#e8e8e8;transform:scaleX(0.962);">Grid = 0'10"</span>
<div style="left:774.3px;top:681px;width:1.8px;height:18px;background:#141414;"></div>
<div style="left:776.3px;top:680px;width:21px;height:22px;background:#5f8ac5;border-radius:3px"></div>
<span class="t" style="left:801.4px;top:685px;font-size:11.5px;color:#e8e8e8;transform:scaleX(0.933);">Add Time Tag</span>
<div style="left:1043px;top:655px;width:42.5px;height:42px;background:#5c5c5c;border-radius:3px"></div>
<div style="left:1089.7px;top:655px;width:46.5px;height:20px;background:#5c5c5c;border-radius:3px"></div>
<div style="left:1089.7px;top:677px;width:46.5px;height:20px;background:#5c5c5c;border-radius:3px"></div>
<span class="t" style="left:1090.8px;top:660px;font-size:11.5px;color:#e4e4e4;transform:scaleX(0.930);">Auto Key</span>
<span class="t" style="left:1094.0px;top:682px;font-size:11.5px;color:#e4e4e4;transform:scaleX(0.894);">Set Key</span>
<div style="left:1141px;top:655px;width:114.3px;height:19.5px;background:#646464;"></div>
<span class="t" style="left:1146.0px;top:659px;font-size:11.5px;color:#e4e4e4;transform:scaleX(0.927);">Selected</span>
<svg style="left:1242px;top:663px" width="7" height="5"><path d="M0 0h6.600l-3.300 4.400z" fill="#e0e0e0"/></svg>
<div style="left:1167.2px;top:677px;width:88.3px;height:20px;background:#5c5c5c;border-radius:3px"></div>
<span class="t" style="left:1179.0px;top:682px;font-size:11.5px;color:#e4e4e4;transform:scaleX(0.970);">Key Filters...</span>
<div style="left:937.7px;top:679.3px;width:68.3px;height:16px;background:#5f5f5f;border-radius:2px"></div>
<span class="t" style="left:941.0px;top:682px;font-size:11.5px;color:#e4e4e4;transform:scaleX(0.938);">0</span>
<div style="left:934.7px;top:657.5px;width:1.5px;height:15.5px;background:#161616;"></div>
<div style="left:1006.7px;top:657.5px;width:1.5px;height:15.5px;background:#161616;"></div>
<div style="left:934.7px;top:679px;width:1.5px;height:16.5px;background:#161616;"></div>
<div style="left:1006.7px;top:679px;width:1.5px;height:16.5px;background:#161616;"></div>
</div>
<svg style="left:669px;top:352px;overflow:hidden" width="481" height="242" viewBox="0 0 481 242"><path d="M240.7 295.5L11.2 120.6M240.7 295.5L470.2 120.6M264.7 277.2L32.6 112.6M216.7 277.2L448.8 112.6M287.1 260.1L53.1 105.0M194.3 260.1L428.3 105.0M308.0 244.2L72.7 97.7M173.4 244.2L408.7 97.7M327.5 229.4L91.3 90.7M153.9 229.4L390.1 90.7M345.8 215.4L109.2 84.0M135.6 215.4L372.2 84.0M363.0 202.3L126.3 77.6M118.4 202.3L355.1 77.6M394.4 178.4L158.4 65.7M87.0 178.4L323.0 65.7M408.8 167.4L173.5 60.0M72.6 167.4L307.9 60.0M422.4 157.1L188.0 54.6M59.0 157.1L293.4 54.6M435.3 147.2L201.9 49.4M46.1 147.2L279.5 49.4M447.6 137.9L215.3 44.4M33.8 137.9L266.1 44.4M459.2 129.1L228.3 39.6M22.2 129.1L253.1 39.6M470.2 120.6L240.7 34.9M11.2 120.6L240.7 34.9" stroke="#6e6e6e" stroke-width="1" fill="none" opacity="0.72"/><path d="M379.2 190.0L142.7 71.5M102.2 190.0L338.7 71.5" stroke="#050505" stroke-width="1.1" fill="none"/></svg>
<svg style="left:0;top:0" width="1365" height="701" viewBox="0 0 1365 701"><path d="M20 34H28.300A5.400 5.400 0 0 1 28.300 44.800H26" fill="none" stroke="#d2d2d2" stroke-width="4.8" /><path d="M14.200 34l6.300-5.300v10.600z" fill="#d2d2d2" stroke="none" stroke-width="1" /><path d="M62 34H53.700A5.400 5.400 0 0 0 53.700 44.800H56" fill="none" stroke="#d2d2d2" stroke-width="4.8" /><path d="M67.800 34l-6.300-5.300v10.600z" fill="#d2d2d2" stroke="none" stroke-width="1" /><g transform="rotate(-45 95 37.900)"><rect x="84" y="34.4" width="12" height="7" rx="3.5" fill="none" stroke="#d2d2d2" stroke-width="3" /><rect x="94" y="34.4" width="12" height="7" rx="3.5" fill="none" stroke="#444444" stroke-width="5.4" stroke-dasharray="9 100" stroke-dashoffset="-29.500"/><rect x="94" y="34.4" width="12" height="7" rx="3.5" fill="none" stroke="#d2d2d2" stroke-width="3" /><rect x="84" y="34.4" width="12" height="7" rx="3.5" fill="none" stroke="#444444" stroke-width="5.4" stroke-dasharray="7 100" stroke-dashoffset="-8.500"/><rect x="84" y="34.4" width="12" height="7" rx="3.5" fill="none" stroke="#d2d2d2" stroke-width="3" stroke-dasharray="9 100" stroke-dashoffset="-7.500"/></g><g transform="rotate(-45 127.150 37.900)"><path d="M123.600 34.900H118.700A3 3 0 0 0 118.700 40.900H123.600" fill="none" stroke="#d2d2d2" stroke-width="3.2" stroke-linecap="round"/><path d="M130.700 34.900H135.600A3 3 0 0 1 135.600 40.900H130.700" fill="none" stroke="#d2d2d2" stroke-width="3.2" stroke-linecap="round"/></g><path d="M121 32.100l4.800 4.500M128.100 39.200l4.800 4.500" fill="none" stroke="#3fc4c4" stroke-width="2" /><path d="M148.300 36.8c3 3.800 6.500 3.800 10.500 .6s7.500 -2 11 1.600" fill="none" stroke="#d2d2d2" stroke-width="2.2" /><path d="M148.300 40.8c3 3.800 6.500 3.800 10.500 .6s7.500 -2 11 1.600" fill="none" stroke="#d2d2d2" stroke-width="2.2" /><path d="M148.300 44.8c3 3.800 6.500 3.800 10.500 .6s7.500 -2 11 1.600" fill="none" stroke="#d2d2d2" stroke-width="2.2" /><g transform="rotate(-52 164 33.300)"><rect x="157.3" y="30.8" width="7" height="5" rx="2.5" fill="none" stroke="#444444" stroke-width="3.2" /><rect x="157.3" y="30.8" width="7" height="5" rx="2.5" fill="none" stroke="#f6b21a" stroke-width="1.7" /><rect x="163.3" y="30.8" width="7" height="5" rx="2.5" fill="none" stroke="#444444" stroke-width="3.2" stroke-dasharray="6 100" stroke-dashoffset="-14"/><rect x="163.3" y="30.8" width="7" height="5" rx="2.5" fill="none" stroke="#f6b21a" stroke-width="1.7" /></g><rect x="255.5" y="26.5" width="18" height="18" rx="0" fill="#d2d2d2" stroke="none" stroke-width="1" /><path d="M269.3 36.7v11l2.600-2.400 2 4.400 2.200-1-2-4.200h3.600z" fill="#f5a800" stroke="none" stroke-width="1" /><rect x="287.8" y="26.7" width="20.4" height="3.3" rx="0" fill="#d2d2d2" stroke="none" stroke-width="1" /><rect x="287.8" y="31.3" width="12.5" height="3.3" rx="0" fill="#d2d2d2" stroke="none" stroke-width="1" /><rect x="287.8" y="35.5" width="20.4" height="3.3" rx="0" fill="#d2d2d2" stroke="none" stroke-width="1" /><rect x="287.8" y="39.5" width="12.5" height="3.3" rx="0" fill="#d2d2d2" stroke="none" stroke-width="1" /><path d="M301.8 36.7v11l2.600-2.400 2 4.400 2.200-1-2-4.200h3.600z" fill="#f5a800" stroke="none" stroke-width="1" /><rect x="320.8" y="27.8" width="21" height="20.5" rx="0" fill="none" stroke="#3fc4c4" stroke-width="2.2" stroke-dasharray="4.200 2.600"/><path d="M346 49V53H342z" fill="#d0d0d0" stroke="none" stroke-width="1" /><rect x="353" y="27.8" width="14.5" height="20.5" rx="0" fill="none" stroke="#e6e6e6" stroke-width="2" stroke-dasharray="3.500 2.500"/><rect x="364" y="33" width="10.3" height="10.3" rx="0" fill="#3fc4c4" stroke="none" stroke-width="1" /><rect x="386" y="24" width="30" height="29" rx="3" fill="#5f8ac5" stroke="none" stroke-width="1" /><path d="M401.900 27.300L413.400 39L401.900 50.600L390.700 39z" fill="#d8d8d8" stroke="#5a6a80" stroke-width="0.6" /><rect x="395.9" y="33.6" width="3.2" height="3.2" rx="0" fill="#5f8ac5" stroke="#3a4a66" stroke-width="0.7" /><rect x="404.7" y="33.6" width="3.2" height="3.2" rx="0" fill="#5f8ac5" stroke="#3a4a66" stroke-width="0.7" /><rect x="395.9" y="41.7" width="3.2" height="3.2" rx="0" fill="#5f8ac5" stroke="#3a4a66" stroke-width="0.7" /><rect x="404.7" y="41.7" width="3.2" height="3.2" rx="0" fill="#5f8ac5" stroke="#3a4a66" stroke-width="0.7" /><path d="M440.200 32.500A8.600 8.600 0 1 0 442.500 41" fill="none" stroke="#d2d2d2" stroke-width="3.3" /><path d="M436 26.500l7.800 1.200-1.500 8z" fill="#d2d2d2" stroke="none" stroke-width="1" /><rect x="454.8" y="27.8" width="20.5" height="20.2" rx="0" fill="none" stroke="#3fc4c4" stroke-width="2.2" stroke-dasharray="4.200 2.600"/><rect x="453.5" y="38.5" width="11" height="11" rx="0" fill="#d2d2d2" stroke="#444444" stroke-width="1" /><path d="M462 33.800h6.300v6.300" fill="none" stroke="#3fc4c4" stroke-width="2.2" /><path d="M479 49V53H475z" fill="#d0d0d0" stroke="none" stroke-width="1" /><circle cx="495.4" cy="39.3" r="9.5" fill="#d2d2d2" stroke="none" stroke-width="1" /><circle cx="503" cy="31" r="4.8" fill="#3fc4c4" stroke="none" stroke-width="1" /><path d="M503 31.500l-6 6" fill="none" stroke="#f5a800" stroke-width="2" /><path d="M494.500 34.500v5.800h5.800z" fill="#f5a800" stroke="none" stroke-width="1" /><path d="M512 49V53H508z" fill="#d0d0d0" stroke="none" stroke-width="1" /><rect x="588" y="26.7" width="10" height="15.6" rx="0" fill="#d2d2d2" stroke="none" stroke-width="1" /><rect x="600" y="26.7" width="10" height="9.5" rx="0" fill="#d2d2d2" stroke="none" stroke-width="1" /><path d="M593 39.500v9M588.500 44h9M605 32v9M600.500 36.500h9" fill="none" stroke="#3fc4c4" stroke-width="2.2" /><path d="M614 48V52H610z" fill="#d0d0d0" stroke="none" stroke-width="1" /><path d="M627 38h21M637.500 29v19" fill="none" stroke="#d2d2d2" stroke-width="1.8" /><rect x="625.5" y="36" width="4" height="4" rx="0" fill="#d2d2d2" stroke="none" stroke-width="1" /><rect x="645.5" y="36" width="4" height="4" rx="0" fill="#d2d2d2" stroke="none" stroke-width="1" /><rect x="635.5" y="45.5" width="4" height="4" rx="0" fill="#d2d2d2" stroke="none" stroke-width="1" /><rect x="635.3" y="26.7" width="4.4" height="4.4" rx="0" fill="#3fc4c4" stroke="none" stroke-width="1" /><rect x="654" y="24" width="30" height="29" rx="3" fill="#5f8ac5" stroke="none" stroke-width="1" /><rect x="658.8" y="27.8" width="22.4" height="22" rx="3.5" fill="#d4d4d4" stroke="#444" stroke-width="0.8" /><path d="M670 31.500l4.200 4.800h-2.300v4h-3.800v-4h-2.300z" fill="#3c3c3c" stroke="none" stroke-width="1" /><rect x="692" y="24" width="30" height="29" rx="3" fill="#5f8ac5" stroke="none" stroke-width="1" /><text x="695.300" y="50.200" font-family="Liberation Sans,sans-serif" font-weight="bold" font-size="29.500" fill="#d6d6d6" stroke="#4a4a4a" stroke-width="0.700">3</text><g transform="translate(707.5 26.5)"><path d="M0.600 6.200L5.200 2.300A3.900 3.900 0 0 1 10.400 7.800L5.800 11.800" fill="none" stroke="#f5a800" stroke-width="2.7" /><path d="M1.500 3.600L4 6.500M6.600 9.300L9.100 12.200" fill="none" stroke="#54473a" stroke-width="0.9" /></g><path d="M722 49V53H718z" fill="#d0d0d0" stroke="none" stroke-width="1" /><path d="M729.500 30v17h18" fill="none" stroke="#d2d2d2" stroke-width="2.2" /><path d="M729.500 38.500a8.500 8.500 0 0 1 8.500 8.500" fill="none" stroke="#d2d2d2" stroke-width="2" /><g transform="translate(738 26.5)"><path d="M0.600 6.200L5.200 2.300A3.900 3.900 0 0 1 10.400 7.800L5.800 11.800" fill="none" stroke="#f5a800" stroke-width="2.7" /><path d="M1.500 3.600L4 6.500M6.600 9.300L9.100 12.200" fill="none" stroke="#54473a" stroke-width="0.9" /></g><circle cx="765" cy="34.5" r="3.6" fill="none" stroke="#d2d2d2" stroke-width="2.2" /><circle cx="778" cy="44.5" r="3.6" fill="none" stroke="#d2d2d2" stroke-width="2.2" /><path d="M766 48.500l11.500-18" fill="none" stroke="#d2d2d2" stroke-width="2.2" /><g transform="translate(771.5 26.5)"><path d="M0.600 6.200L5.200 2.300A3.900 3.900 0 0 1 10.400 7.800L5.800 11.800" fill="none" stroke="#f5a800" stroke-width="2.7" /><path d="M1.500 3.600L4 6.500M6.600 9.300L9.100 12.200" fill="none" stroke="#54473a" stroke-width="0.9" /></g><path d="M797.500 29l5.800 8.300h-11.600zM797.500 48.500l5.800-8.300h-11.600z" fill="#d2d2d2" stroke="none" stroke-width="1" /><g transform="translate(802 26.5)"><path d="M0.600 6.200L5.200 2.300A3.900 3.900 0 0 1 10.400 7.800L5.800 11.800" fill="none" stroke="#f5a800" stroke-width="2.7" /><path d="M1.500 3.600L4 6.500M6.600 9.300L9.100 12.200" fill="none" stroke="#54473a" stroke-width="0.9" /></g><text x="829.500" y="45" font-family="Liberation Sans,sans-serif" font-size="21" fill="#d6d6d6" textLength="18" lengthAdjust="spacingAndGlyphs">{}</text><path d="M841.500 37.500l8-8" fill="none" stroke="#f5a800" stroke-width="3.4" /><path d="M839.300 39.800l1-3.200 2.200 2.200z" fill="#f5a800" stroke="none" stroke-width="1" /><path d="M850 29l1.500-1.500" fill="none" stroke="#f6d58a" stroke-width="3.4" /><path d="M987.500 29l7 5.500v12l-7-5.500z" fill="#d2d2d2" stroke="none" stroke-width="1" /><path d="M1011 29l-7 5.500v12l7-5.500z" fill="#3fc4c4" stroke="none" stroke-width="1" /><path d="M999.300 27v22" fill="none" stroke="#e6e6e6" stroke-width="1.8" stroke-dasharray="3.500 1.800"/><path d="M1021 27v22" fill="none" stroke="#3fc4c4" stroke-width="2.2" stroke-dasharray="3.500 1.600"/><rect x="1025" y="29" width="12" height="7" rx="0" fill="#d2d2d2" stroke="none" stroke-width="1" /><rect x="1025" y="40" width="15" height="7" rx="0" fill="#d2d2d2" stroke="none" stroke-width="1" /><path d="M1046 49V53H1042z" fill="#d0d0d0" stroke="none" stroke-width="1" /><rect x="1058.5" y="27" width="20.5" height="22" rx="0" fill="#d6d6d6" stroke="none" stroke-width="1" /><path d="M1061 30h15.500" fill="none" stroke="#333" stroke-width="1.6" /><path d="M1061 35.8h3.500M1066.500 35.8h10" fill="none" stroke="#333" stroke-width="2.4" /><path d="M1061 40.5h3.500M1066.500 40.5h10" fill="none" stroke="#333" stroke-width="2.4" /><path d="M1061 45.199999999999996h3.500M1066.500 45.199999999999996h10" fill="none" stroke="#333" stroke-width="2.4" /><rect x="1091" y="27" width="20.5" height="22" rx="0" fill="#d6d6d6" stroke="none" stroke-width="1" /><path d="M1093.500 30h15.500" fill="none" stroke="#333" stroke-width="1.6" /><path d="M1101.200 33.2l6.500 3.300-6.500 3.300-6.500-3.300z" fill="#333" stroke="#d6d6d6" stroke-width="0.8" /><path d="M1101.200 36.900000000000006l6.500 3.300-6.500 3.300-6.500-3.300z" fill="#333" stroke="#d6d6d6" stroke-width="0.8" /><path d="M1101.200 40.6l6.500 3.300-6.500 3.300-6.500-3.300z" fill="#333" stroke="#d6d6d6" stroke-width="0.8" /><rect x="1125.3" y="25.3" width="27.8" height="26.8" rx="3" fill="#d4d4d4" stroke="#5f8ac5" stroke-width="2.6" /><rect x="1128.5" y="28" width="22" height="21.5" rx="0" fill="#d4d4d4" stroke="none" stroke-width="1" /><path d="M1140 28v4.700h10.500" fill="none" stroke="#444444" stroke-width="1.2" /><rect x="1140.6" y="28" width="4.2" height="4" rx="0" fill="#e4e4e4" stroke="none" stroke-width="1" /><rect x="1146" y="28" width="4.4" height="4" rx="0" fill="#e4e4e4" stroke="none" stroke-width="1" /><path d="M1132 38.7h5.500M1142.500 38.7h5.500" fill="none" stroke="#333" stroke-width="2.4" /><path d="M1132 43.5h5.500M1142.500 43.5h5.500" fill="none" stroke="#333" stroke-width="2.4" /><rect x="1160" y="27" width="22" height="22" rx="0" fill="#d6d6d6" stroke="none" stroke-width="1" /><path d="M1160 32.500h22" fill="none" stroke="#444444" stroke-width="1" /><rect x="1162.0" y="28.6" width="2.2" height="2.2" rx="0" fill="#333" stroke="none" stroke-width="1" /><rect x="1165.2" y="28.6" width="2.2" height="2.2" rx="0" fill="#333" stroke="none" stroke-width="1" /><rect x="1168.4" y="28.6" width="2.2" height="2.2" rx="0" fill="#333" stroke="none" stroke-width="1" /><path d="M1163.500 41.500c2.500-6.500 5.500-6.500 7.500-1s5 5.500 7.500-1" fill="none" stroke="#2fb6b6" stroke-width="2.2" /><rect x="1192" y="27" width="22" height="4" rx="0" fill="#d6d6d6" stroke="none" stroke-width="1" /><rect x="1192" y="45" width="22" height="4.2" rx="0" fill="#3fc4c4" stroke="none" stroke-width="1" /><path d="M1201 33h4.200v4.500h3.800l-5.900 5.500-5.900-5.500h3.800z" fill="#3fc4c4" stroke="none" stroke-width="1" /><circle cx="1232.8" cy="30.8" r="3.3" fill="#e6e6e6" stroke="none" stroke-width="1" /><path d="M1229.5 30.8h3.300v-3.300M1232.8 34.1v-3.300h3.300" fill="none" stroke="#444" stroke-width="1.2" /><circle cx="1232.8" cy="45.2" r="3.3" fill="#e6e6e6" stroke="none" stroke-width="1" /><path d="M1229.5 45.2h3.300v-3.300M1232.8 48.5v-3.300h3.300" fill="none" stroke="#444" stroke-width="1.2" /><path d="M1239 30.800h6.500v4M1239 45.200h6.500v-4" fill="none" stroke="#3fc4c4" stroke-width="1.8" /><path d="M1242.500 34.500l9 7M1251.500 34.500l-9 7" fill="none" stroke="#e6e6e6" stroke-width="2" stroke-dasharray="2.500 1.500"/><path d="M1256 49V53H1252z" fill="#d0d0d0" stroke="none" stroke-width="1" /><g transform="translate(1268 30) scale(1.0)"><path d="M17 6.700C20 5.200 22.400 7 21.900 9.600C21.500 11.600 20 12.900 18.200 13.300" fill="none" stroke="#d2d2d2" stroke-width="1.6" /><path d="M0 4.200L1.200 3.900L7.800 6.800C8.500 5 10 3.900 10.800 3.600L10.500 1.700L10.100 1.100H13.500L13.100 1.700L12.800 3.600C14.500 4 16.500 5.300 17.300 6.800C18.800 9 18.800 12 17.300 14.600H6.200C4.800 13 2 8 0 4.200Z" fill="#d2d2d2" stroke="none" stroke-width="0" /></g><circle cx="1283.9" cy="43.1" r="6.8" fill="#444444" stroke="none" stroke-width="1" /><rect x="1282.5500000000002" y="36.9" width="2.700" height="6.2" fill="#f7b318" transform="rotate(0 1283.9 43.1)"/><rect x="1282.5500000000002" y="36.9" width="2.700" height="6.2" fill="#f7b318" transform="rotate(45 1283.9 43.1)"/><rect x="1282.5500000000002" y="36.9" width="2.700" height="6.2" fill="#f7b318" transform="rotate(90 1283.9 43.1)"/><rect x="1282.5500000000002" y="36.9" width="2.700" height="6.2" fill="#f7b318" transform="rotate(135 1283.9 43.1)"/><rect x="1282.5500000000002" y="36.9" width="2.700" height="6.2" fill="#f7b318" transform="rotate(180 1283.9 43.1)"/><rect x="1282.5500000000002" y="36.9" width="2.700" height="6.2" fill="#f7b318" transform="rotate(225 1283.9 43.1)"/><rect x="1282.5500000000002" y="36.9" width="2.700" height="6.2" fill="#f7b318" transform="rotate(270 1283.9 43.1)"/><rect x="1282.5500000000002" y="36.9" width="2.700" height="6.2" fill="#f7b318" transform="rotate(315 1283.9 43.1)"/><circle cx="1283.9" cy="43.1" r="4.6" fill="#f7b318" stroke="none" stroke-width="1" /><circle cx="1283.9" cy="43.1" r="2.3" fill="#bdbdbd" stroke="none" stroke-width="1" /><rect x="1299.7" y="26.7" width="22.7" height="5.3" rx="0" fill="#d6d6d6" stroke="none" stroke-width="1" /><rect x="1299.7" y="33" width="22.7" height="16.2" rx="0" fill="#3fc4c4" stroke="none" stroke-width="1" /><rect x="1301.2" y="28.2" width="2.4" height="2.4" rx="0" fill="#2a2a2a" stroke="none" stroke-width="1" /><rect x="1304.5" y="28.2" width="2.4" height="2.4" rx="0" fill="#2a2a2a" stroke="none" stroke-width="1" /><rect x="1307.8" y="28.2" width="2.4" height="2.4" rx="0" fill="#2a2a2a" stroke="none" stroke-width="1" /><g transform="translate(1302.3 33.6) scale(0.84)"><path d="M17 6.700C20 5.200 22.400 7 21.900 9.600C21.500 11.600 20 12.900 18.200 13.300" fill="none" stroke="#d4d4d4" stroke-width="1.6" /><path d="M0 4.200L1.200 3.900L7.800 6.800C8.500 5 10 3.900 10.800 3.600L10.500 1.700L10.100 1.100H13.500L13.100 1.700L12.800 3.600C14.500 4 16.500 5.300 17.300 6.800C18.800 9 18.800 12 17.300 14.600H6.200C4.800 13 2 8 0 4.200Z" fill="#d4d4d4" stroke="#333" stroke-width="0.9" /></g><g transform="translate(1331.8 30) scale(1.0)"><path d="M17 6.700C20 5.200 22.400 7 21.900 9.600C21.500 11.600 20 12.900 18.200 13.300" fill="none" stroke="#d2d2d2" stroke-width="1.6" /><path d="M0 4.200L1.200 3.900L7.800 6.800C8.500 5 10 3.900 10.800 3.600L10.500 1.700L10.100 1.100H13.500L13.100 1.700L12.800 3.600C14.500 4 16.500 5.300 17.300 6.800C18.800 9 18.800 12 17.300 14.600H6.200C4.800 13 2 8 0 4.200Z" fill="#d2d2d2" stroke="none" stroke-width="0" /></g><path d="M1351.200 36.300l-6.400 7.700h3.700l-2.700 6.400 8-8.900h-3.900l3.300-5.200z" fill="#3fc4c4" stroke="#444444" stroke-width="0.7" /><path d="M1358.5 49.5V53.5H1354.5z" fill="#d0d0d0" stroke="none" stroke-width="1" /><path d="M1363 33.800l2.500 -.6v3z" fill="#d2d2d2" stroke="none" stroke-width="1" /><path d="M204.500 318.500V294" fill="none" stroke="#0c9e0c" stroke-width="1.4" /><path d="M204.500 318.500H229" fill="none" stroke="#c60a0a" stroke-width="1.4" /><text x="204.7" y="293.5" font-family="Liberation Sans,sans-serif" font-size="11" fill="#0c9e0c">y</text><text x="229.7" y="319.2" font-family="Liberation Sans,sans-serif" font-size="11" fill="#c60a0a">x</text><text x="204.8" y="319.2" font-family="Liberation Sans,sans-serif" font-size="11" fill="#0a0ad6">z</text><path d="M693.500 318.500V294" fill="none" stroke="#0a0ad6" stroke-width="1.4" /><path d="M693.500 318.500H718" fill="none" stroke="#c60a0a" stroke-width="1.4" /><text x="694" y="294.3" font-family="Liberation Sans,sans-serif" font-size="11" fill="#0a0ad6">z</text><text x="718.7" y="319.2" font-family="Liberation Sans,sans-serif" font-size="11" fill="#c60a0a">x</text><text x="694" y="319" font-family="Liberation Sans,sans-serif" font-size="11" fill="#0c9e0c">y</text><path d="M204.500 568.500V544" fill="none" stroke="#0a0ad6" stroke-width="1.4" /><path d="M204.500 568.500H185" fill="none" stroke="#0c9e0c" stroke-width="1.4" /><text x="205.2" y="544.3" font-family="Liberation Sans,sans-serif" font-size="11" fill="#0a0ad6">z</text><text x="180.8" y="568.8" font-family="Liberation Sans,sans-serif" font-size="11" fill="#0c9e0c">y</text><text x="204.8" y="569.2" font-family="Liberation Sans,sans-serif" font-size="11" fill="#c60a0a">x</text><path d="M693.500 568.500V547" fill="none" stroke="#0a0ad6" stroke-width="1.4" /><path d="M693.500 568.500L712.500 560.200" fill="none" stroke="#c60a0a" stroke-width="1.4" /><path d="M693.500 568.500L677.500 560.700" fill="none" stroke="#0c9e0c" stroke-width="1.4" /><text x="694" y="547.5" font-family="Liberation Sans,sans-serif" font-size="11" fill="#0a0ad6">z</text><text x="712" y="560" font-family="Liberation Sans,sans-serif" font-size="11" fill="#c60a0a">x</text><text x="676.5" y="560" font-family="Liberation Sans,sans-serif" font-size="11" fill="#0c9e0c">y</text><circle cx="606.4" cy="156.4" r="29.6" fill="none" stroke="rgba(152,156,164,0.720)" stroke-width="6.5" /><circle cx="606.4" cy="156.4" r="25.6" fill="none" stroke="#2c2f3a" stroke-width="0.7" /><circle cx="606.4" cy="156.4" r="24.3" fill="none" stroke="#50535c" stroke-width="0.6" /><rect x="590.7" y="140.7" width="31.6" height="31.3" rx="0" fill="rgba(150,150,150,0.780)" stroke="none" stroke-width="1" /><rect x="597" y="147" width="19" height="19" rx="0" fill="rgba(118,122,132,0.550)" stroke="none" stroke-width="1" /><text x="606.5" y="159.5" text-anchor="middle" font-family="Liberation Sans,sans-serif" font-weight="normal" font-size="8" fill="#4a4d58" textLength="13.5" lengthAdjust="spacingAndGlyphs">TOP</text><text x="606.5" y="127.3" text-anchor="middle" font-family="Liberation Sans,sans-serif" font-weight="bold" font-size="10.5" fill="#9c9c9c">N</text><text x="606.5" y="194" text-anchor="middle" font-family="Liberation Sans,sans-serif" font-weight="bold" font-size="10.5" fill="#9c9c9c">S</text><text x="574" y="160.5" text-anchor="middle" font-family="Liberation Sans,sans-serif" font-weight="bold" font-size="10.5" fill="#9c9c9c">W</text><text x="639.5" y="160.5" text-anchor="middle" font-family="Liberation Sans,sans-serif" font-weight="bold" font-size="10.5" fill="#9c9c9c">E</text><rect x="1080" y="141" width="31" height="31" rx="0" fill="rgba(143,143,143,0.800)" stroke="none" stroke-width="1" /><rect x="1086" y="148" width="19" height="4" rx="0" fill="rgba(118,122,140,0.500)" stroke="none" stroke-width="1" /><rect x="1086" y="163" width="19" height="2" rx="0" fill="rgba(118,122,140,0.400)" stroke="none" stroke-width="1" /><text x="1095.5" y="159.7" text-anchor="middle" font-family="Liberation Sans,sans-serif" font-weight="bold" font-size="8.5" fill="#42475c" textLength="21" lengthAdjust="spacingAndGlyphs">FRONT</text><path d="M1056 173.8A39 2.600 0 0 0 1134 173.8" fill="none" stroke="#cfcfcf" stroke-width="0.9" /><path d="M1056 173.8A39 2.600 0 0 1 1078 171.5M1134 173.8A39 2.600 0 0 0 1112 171.5" fill="none" stroke="#bdbdbd" stroke-width="0.8" /><path d="M1064 173.8A31 1.800 0 0 0 1126 173.8" fill="none" stroke="#707070" stroke-width="0.8" /><rect x="591" y="391" width="31" height="31" rx="0" fill="rgba(143,143,143,0.800)" stroke="none" stroke-width="1" /><rect x="597" y="398" width="19" height="4" rx="0" fill="rgba(118,122,140,0.500)" stroke="none" stroke-width="1" /><rect x="597" y="413" width="19" height="2" rx="0" fill="rgba(118,122,140,0.400)" stroke="none" stroke-width="1" /><text x="606.7" y="409.7" text-anchor="middle" font-family="Liberation Sans,sans-serif" font-weight="bold" font-size="8.5" fill="#42475c" textLength="14.5" lengthAdjust="spacingAndGlyphs">LEFT</text><path d="M567 423.8A39 2.600 0 0 0 645 423.8" fill="none" stroke="#cfcfcf" stroke-width="0.9" /><path d="M567 423.8A39 2.600 0 0 1 589 421.5M645 423.8A39 2.600 0 0 0 623 421.5" fill="none" stroke="#bdbdbd" stroke-width="0.8" /><path d="M575 423.8A31 1.800 0 0 0 637 423.8" fill="none" stroke="#707070" stroke-width="0.8" /><ellipse cx="1095.6" cy="423.5" rx="35" ry="18" fill="#cfdbe2" stroke="none" stroke-width="1" /><ellipse cx="1095.6" cy="423" rx="28.5" ry="13.5" fill="#2b2b2b" stroke="#6b7a8a" stroke-width="0.8" /><path d="M1095.600 386.400L1115.600 394.500L1114 419L1095.600 429L1077 418.500L1075 394z" fill="#ececec" stroke="none" stroke-width="1" /><path d="M1075 394L1095.600 405L1095.600 429L1077 418.500z" fill="#dcdcdc" stroke="none" stroke-width="1" /><path d="M1115.600 394.500L1095.600 405L1095.600 429L1114 419z" fill="#e4e4e4" stroke="none" stroke-width="1" /><circle cx="1095.5" cy="404.5" r="3.8" fill="#c4c9d4" stroke="none" stroke-width="1" /><text x="1087" y="414" font-family="Liberation Sans,sans-serif" font-weight="bold" font-size="5.500" fill="#555c6c" text-anchor="middle" transform="rotate(24 1087 414)">LEFT</text><text x="1106" y="414" font-family="Liberation Sans,sans-serif" font-weight="bold" font-size="5.500" fill="#555c6c" text-anchor="middle" transform="rotate(-24 1106 414)">FRONT</text><path d="M1091 394l1.500 1.500 1.500-1.500 1.500 1.500 1.500-1.500 1.500 1.500" fill="none" stroke="#666" stroke-width="0.8" /><path d="M1061 435l4 3 3-2.500" fill="none" stroke="#eee" stroke-width="1.4" /><circle cx="1124.5" cy="436" r="2.2" fill="none" stroke="#eee" stroke-width="1.3" /><circle cx="1141" cy="436" r="2.2" fill="none" stroke="#eee" stroke-width="1.3" /><path d="M1070.200 406l3 -2.500M1121 404l-3-2.500" fill="none" stroke="#e8e8e8" stroke-width="1.5" /><path d="M1066 355.500l4 4v5.500h-8v-5.500z" fill="#cfcfcf" stroke="none" stroke-width="1" /><rect x="1064" y="361.5" width="4" height="1.5" rx="0" fill="#777" stroke="none" stroke-width="1" /><circle cx="55" cy="174" r="5.8" fill="#d2d2d2" stroke="#333333" stroke-width="1" /><circle cx="52.5" cy="194.5" r="5" fill="#d2d2d2" stroke="#333333" stroke-width="1" /><rect x="53.5" y="196" width="8" height="8" rx="0" fill="#d2d2d2" stroke="#333333" stroke-width="1" /><path d="M55 212a5.200 5.200 0 0 1 3.400 9.200l-.6 2.300h-5.600l-.6-2.300A5.200 5.200 0 0 1 55 212z" fill="#d2d2d2" stroke="#333333" stroke-width="1" /><path d="M52.700 225h4.600M53.300 227h3.400" fill="none" stroke="#d2d2d2" stroke-width="1.2" /><rect x="48" y="238" width="10" height="10" rx="2" fill="#d2d2d2" stroke="#333333" stroke-width="1" /><path d="M58.500 241.5l3.500-3v9l-3.500-3z" fill="#d2d2d2" stroke="#333333" stroke-width="1" /><path d="M48.500 258L62 273.5H48.500z" fill="#d2d2d2" stroke="#333333" stroke-width="1" /><path d="M51.500 265.5l4.500 5.200h-4.500z" fill="#5f8ac5" stroke="#333333" stroke-width="0.8" /><path d="M47.500 285q2.500-3 5-1t5 0t5-1.500" fill="none" stroke="#333333" stroke-width="3" /><path d="M47.500 290q2.500-3 5-1t5 0t5-1.500" fill="none" stroke="#333333" stroke-width="3" /><path d="M47.500 295q2.500-3 5-1t5 0t5-1.500" fill="none" stroke="#333333" stroke-width="3" /><path d="M47.500 285q2.500-3 5-1t5 0t5-1.500" fill="none" stroke="#d2d2d2" stroke-width="1.6" /><path d="M47.500 290q2.500-3 5-1t5 0t5-1.500" fill="none" stroke="#d2d2d2" stroke-width="1.6" /><path d="M47.500 295q2.500-3 5-1t5 0t5-1.500" fill="none" stroke="#d2d2d2" stroke-width="1.6" /><rect x="47.5" y="304.5" width="15" height="15" rx="0" fill="none" stroke="#223" stroke-width="2.8" /><rect x="47.5" y="304.5" width="15" height="15" rx="0" fill="none" stroke="#35d0c8" stroke-width="1.4" /><circle cx="52.8" cy="309.7" r="4.5" fill="#d2d2d2" stroke="#333333" stroke-width="0.8" /><rect x="54.5" y="311.5" width="6" height="6" rx="0" fill="#d2d2d2" stroke="#333333" stroke-width="0.8" /><circle cx="55" cy="334" r="7.3" fill="#d2d2d2" stroke="#333333" stroke-width="1" /><path d="M53.500 331h3v3.500h2.500l-4 4-4-4h2.500z" fill="#20b8b0" stroke="none" stroke-width="1" /><path d="M50 339v3h10v-3" fill="none" stroke="#20b8b0" stroke-width="1.5" /><path d="M50.500 355.5L62.500 366L54 352.5z" fill="#d2d2d2" stroke="#333333" stroke-width="1" /><circle cx="50.5" cy="352.5" r="3" fill="#d2d2d2" stroke="#333333" stroke-width="1" /><rect x="48" y="374.5" width="14" height="3.5" rx="0" fill="#d2d2d2" stroke="#333333" stroke-width="1" /><rect x="49" y="378" width="12" height="9.5" rx="0" fill="#d2d2d2" stroke="#333333" stroke-width="1" /><rect x="51.5" y="380.5" width="7" height="2" rx="0" fill="#333333" stroke="none" stroke-width="1" /><path d="M48.500 404h13" stroke="#2a3550" stroke-width="2.400" transform="rotate(90 55 404)"/><path d="M48.500 404h13" stroke="#2a3550" stroke-width="2.400" transform="rotate(150 55 404)"/><path d="M48.500 404h13" stroke="#2a3550" stroke-width="2.400" transform="rotate(210 55 404)"/><path d="M48.500 404h13" stroke="#dcdcdc" stroke-width="1.200" transform="rotate(90 55 404)"/><path d="M48.500 404h13" stroke="#dcdcdc" stroke-width="1.200" transform="rotate(150 55 404)"/><path d="M48.500 404h13" stroke="#dcdcdc" stroke-width="1.200" transform="rotate(210 55 404)"/><circle cx="55" cy="398" r="1.700" fill="#dcdcdc" stroke="#2a3550" stroke-width=".6" transform="rotate(0 55 404)"/><path d="M55 400.5l3 1.750" stroke="#dcdcdc" stroke-width="0.900" transform="rotate(0 55 404)"/><circle cx="55" cy="398" r="1.700" fill="#dcdcdc" stroke="#2a3550" stroke-width=".6" transform="rotate(60 55 404)"/><path d="M55 400.5l3 1.750" stroke="#dcdcdc" stroke-width="0.900" transform="rotate(60 55 404)"/><circle cx="55" cy="398" r="1.700" fill="#dcdcdc" stroke="#2a3550" stroke-width=".6" transform="rotate(120 55 404)"/><path d="M55 400.5l3 1.750" stroke="#dcdcdc" stroke-width="0.900" transform="rotate(120 55 404)"/><circle cx="55" cy="398" r="1.700" fill="#dcdcdc" stroke="#2a3550" stroke-width=".6" transform="rotate(180 55 404)"/><path d="M55 400.5l3 1.750" stroke="#dcdcdc" stroke-width="0.900" transform="rotate(180 55 404)"/><circle cx="55" cy="398" r="1.700" fill="#dcdcdc" stroke="#2a3550" stroke-width=".6" transform="rotate(240 55 404)"/><path d="M55 400.5l3 1.750" stroke="#dcdcdc" stroke-width="0.900" transform="rotate(240 55 404)"/><circle cx="55" cy="398" r="1.700" fill="#dcdcdc" stroke="#2a3550" stroke-width=".6" transform="rotate(300 55 404)"/><path d="M55 400.5l3 1.750" stroke="#dcdcdc" stroke-width="0.900" transform="rotate(300 55 404)"/><circle cx="55" cy="404" r="1.8" fill="#dcdcdc" stroke="#2a3550" stroke-width="0.6" /><path d="M47 427q8-8 16 0q-8 8-16 0z" fill="#e8e8e8" stroke="#333333" stroke-width="1" /><circle cx="55" cy="427" r="2.8" fill="#333333" stroke="none" stroke-width="1" /><rect x="49" y="448.5" width="12" height="14.5" rx="0" fill="#e2e2e2" stroke="#222" stroke-width="1" /><path d="M52 452.0h6" fill="none" stroke="#222" stroke-width="1" /><path d="M52 454.5h5" fill="none" stroke="#222" stroke-width="1" /><path d="M52 457.0h6" fill="none" stroke="#222" stroke-width="1" /><path d="M52 459.5h5" fill="none" stroke="#222" stroke-width="1" /><rect x="49" y="472" width="12.5" height="14" rx="0" fill="#dcdcdc" stroke="none" stroke-width="1" /><rect x="49.5" y="494.5" width="11.5" height="15" rx="0" fill="#2c2c2c" stroke="#e6e6e6" stroke-width="1.4" /><path d="M52 498.500h6M52 501.500h3.500M52 504.500h5" fill="none" stroke="#e6e6e6" stroke-width="1" /><path d="M48 523.500h14l-5.500 7v8l-3-2v-6z" fill="#8a8a8a" stroke="none" stroke-width="1" /><circle cx="59.5" cy="535.5" r="2.6" fill="none" stroke="#8a8a8a" stroke-width="1.8" /><path d="M1172 114v16.500M1163.700 122.300h16.500" fill="none" stroke="#f2f2f2" stroke-width="2.9" /><rect x="1197.5" y="116.5" width="13.5" height="13.5" rx="0" fill="none" stroke="#2a9a9a" stroke-width="1" /><rect x="1196" y="115" width="3" height="3" rx="0" fill="#444444" stroke="#2a9a9a" stroke-width="1" /><rect x="1209.5" y="115" width="3" height="3" rx="0" fill="#444444" stroke="#2a9a9a" stroke-width="1" /><rect x="1196" y="128.5" width="3" height="3" rx="0" fill="#444444" stroke="#2a9a9a" stroke-width="1" /><rect x="1209.5" y="128.5" width="3" height="3" rx="0" fill="#444444" stroke="#2a9a9a" stroke-width="1" /><path d="M1200.500 128.500q0.500-9 9-10" fill="none" stroke="#8c8c8c" stroke-width="2.6" /><rect x="1230" y="115" width="12" height="5" rx="0" fill="#8c8c8c" stroke="none" stroke-width="1" /><path d="M1236 120v3.500M1231 129v-5.500h10.500v5.500" fill="none" stroke="#2a9a9a" stroke-width="1.3" /><rect x="1229" y="128" width="3.5" height="3.5" rx="0" fill="#2a9a9a" stroke="none" stroke-width="1" /><rect x="1239.7" y="128" width="3.5" height="3.5" rx="0" fill="#2a9a9a" stroke="none" stroke-width="1" /><circle cx="1266" cy="122.5" r="7" fill="none" stroke="#2a9a9a" stroke-width="1" /><circle cx="1267.5" cy="122.5" r="7" fill="none" stroke="#2a9a9a" stroke-width="1" /><circle cx="1270" cy="122.5" r="7.5" fill="#9a9a9a" stroke="none" stroke-width="1" /><rect x="1292.5" y="116" width="16" height="11" rx="0" fill="#8c8c8c" stroke="none" stroke-width="1" /><path d="M1296 129.500h9" fill="none" stroke="#8c8c8c" stroke-width="1.6" /><path d="M1299 127h3.500v2h-3.500z" fill="#8c8c8c" stroke="none" stroke-width="1" /><path d="M1327 117.500l10.500 11" fill="none" stroke="#8c8c8c" stroke-width="3.2" stroke-linecap="round"/><path d="M1324 118a3.800 3.800 0 0 0 6.500-2.500l-2.500 1.800-2-2 1.800-2.500A3.800 3.800 0 0 0 1324 118z" fill="#8c8c8c" stroke="#8c8c8c" stroke-width="1.5" /><circle cx="1172.5" cy="151.5" r="7.8" fill="#d8d8d8" stroke="#333" stroke-width="1.3" /><circle cx="1192" cy="148.5" r="4.8" fill="#d2d2d2" stroke="#444444" stroke-width="0.5" /><rect x="1193.5" y="150.5" width="7.5" height="7.5" rx="0" fill="#d2d2d2" stroke="#444444" stroke-width="1" /><path d="M1215.500 144a5 5 0 0 1 3.300 8.800l-.5 2.200h-5.600l-.5-2.200A5 5 0 0 1 1215.500 144z" fill="#d2d2d2" stroke="none" stroke-width="1" /><path d="M1213.200 156.300h4.600M1213.800 158.200h3.400" fill="none" stroke="#d2d2d2" stroke-width="1.2" /><rect x="1231" y="146" width="10.5" height="10.5" rx="1.8" fill="#d2d2d2" stroke="none" stroke-width="1" /><path d="M1242 150l3.500-3v9l-3.500-3z" fill="#d2d2d2" stroke="none" stroke-width="1" /><path d="M1253.500 144.500L1266.500 158H1253.500z" fill="#d2d2d2" stroke="none" stroke-width="1" /><path d="M1256.500 151.500l3.500 4h-3.500z" fill="#444444" stroke="none" stroke-width="1" /><path d="M1275.500 147.7q2.300-3 4.600-1t4.600 0t4.600-1.500" fill="none" stroke="#d2d2d2" stroke-width="1.7" /><path d="M1275.500 152q2.300-3 4.600-1t4.600 0t4.600-1.500" fill="none" stroke="#d2d2d2" stroke-width="1.7" /><path d="M1275.500 156.3q2.300-3 4.600-1t4.600 0t4.600-1.500" fill="none" stroke="#d2d2d2" stroke-width="1.7" /><circle cx="1300" cy="147.5" r="2.3" fill="none" stroke="#d2d2d2" stroke-width="1.5" /><path d="M1300 144.89999999999998v-1.700" stroke="#d2d2d2" stroke-width="1.800" transform="rotate(0 1300 147.5)"/><path d="M1300 144.89999999999998v-1.700" stroke="#d2d2d2" stroke-width="1.800" transform="rotate(45 1300 147.5)"/><path d="M1300 144.89999999999998v-1.700" stroke="#d2d2d2" stroke-width="1.800" transform="rotate(90 1300 147.5)"/><path d="M1300 144.89999999999998v-1.700" stroke="#d2d2d2" stroke-width="1.800" transform="rotate(135 1300 147.5)"/><path d="M1300 144.89999999999998v-1.700" stroke="#d2d2d2" stroke-width="1.800" transform="rotate(180 1300 147.5)"/><path d="M1300 144.89999999999998v-1.700" stroke="#d2d2d2" stroke-width="1.800" transform="rotate(225 1300 147.5)"/><path d="M1300 144.89999999999998v-1.700" stroke="#d2d2d2" stroke-width="1.800" transform="rotate(270 1300 147.5)"/><path d="M1300 144.89999999999998v-1.700" stroke="#d2d2d2" stroke-width="1.800" transform="rotate(315 1300 147.5)"/><circle cx="1306.5" cy="154" r="3.3" fill="none" stroke="#d2d2d2" stroke-width="1.5" /><path d="M1306.5 150.39999999999998v-1.700" stroke="#d2d2d2" stroke-width="1.800" transform="rotate(0 1306.5 154)"/><path d="M1306.5 150.39999999999998v-1.700" stroke="#d2d2d2" stroke-width="1.800" transform="rotate(45 1306.5 154)"/><path d="M1306.5 150.39999999999998v-1.700" stroke="#d2d2d2" stroke-width="1.800" transform="rotate(90 1306.5 154)"/><path d="M1306.5 150.39999999999998v-1.700" stroke="#d2d2d2" stroke-width="1.800" transform="rotate(135 1306.5 154)"/><path d="M1306.5 150.39999999999998v-1.700" stroke="#d2d2d2" stroke-width="1.800" transform="rotate(180 1306.5 154)"/><path d="M1306.5 150.39999999999998v-1.700" stroke="#d2d2d2" stroke-width="1.800" transform="rotate(225 1306.5 154)"/><path d="M1306.5 150.39999999999998v-1.700" stroke="#d2d2d2" stroke-width="1.800" transform="rotate(270 1306.5 154)"/><path d="M1306.5 150.39999999999998v-1.700" stroke="#d2d2d2" stroke-width="1.800" transform="rotate(315 1306.5 154)"/><path d="M23 630v10" fill="none" stroke="#d0d0d0" stroke-width="2" stroke-dasharray="1 1"/><path d="M27 636c2-8 4-8 5.500-1s3 6 4.500 0" fill="none" stroke="#35c4c4" stroke-width="1.5" /><path d="M470.500 661v-3.500h3.500M482 657.500h3.500v3.500M485.500 669v3.500H482M474 672.500h-3.500V669" fill="none" stroke="#262626" stroke-width="1.3" /><rect x="474.5" y="661" width="7.5" height="8" rx="0" fill="#5a5a5a" stroke="#262626" stroke-width="1" /><path d="M501.500 664v-2.500a3.500 3.500 0 0 1 7 0V664" fill="none" stroke="#262626" stroke-width="1.4" /><rect x="499.5" y="664" width="11" height="8.5" rx="1.5" fill="#525252" stroke="#262626" stroke-width="1.2" /><circle cx="505" cy="667.5" r="1.3" fill="#262626" stroke="none" stroke-width="1" /><path d="M505 668v2.500" fill="none" stroke="#262626" stroke-width="1.2" /><rect x="525.5" y="658" width="14.5" height="14.5" rx="0" fill="#f0f0f0" stroke="#222" stroke-width="1" /><circle cx="532.7" cy="665.2" r="4.3" fill="#333" stroke="none" stroke-width="1" /><circle cx="532.7" cy="665.2" r="1.8" fill="#f0f0f0" stroke="none" stroke-width="1" /><path d="M532.700 658.500v14M526 665.200h14" fill="none" stroke="#333" stroke-width="1.3" /><path d="M786.700 684.300l6 2.800v6.500l-6 3-6-3v-6.500z" fill="none" stroke="#222" stroke-width="2.6" /><path d="M786.700 684.300l6 2.800v6.500l-6 3-6-3v-6.500z" fill="none" stroke="#d8d8d8" stroke-width="1" /><path d="M780.700 687.100l6 2.800 6-2.800M786.700 689.900v6.700" fill="none" stroke="#222" stroke-width="1.1" /><path d="M914.500 660.500v9" fill="none" stroke="#e2e2e2" stroke-width="1.6" /><path d="M922 660.500v9l-6-4.500zM929 660.500v9l-6-4.500z" fill="#e2e2e2" stroke="none" stroke-width="1" /><path d="M947 660.500v9l-6.500-4.500z" fill="#e2e2e2" stroke="none" stroke-width="1" /><path d="M950 660.500v9M954 660.500v9" fill="none" stroke="#e2e2e2" stroke-width="1.8" /><path d="M964.500 658.500v14l11.500-7z" fill="#e2e2e2" stroke="none" stroke-width="1" /><path d="M979 670v3h-3z" fill="#e2e2e2" stroke="none" stroke-width="1" /><path d="M987 660.500v9M991 660.500v9" fill="none" stroke="#e2e2e2" stroke-width="1.8" /><path d="M994 660.500v9l6.500-4.500z" fill="#e2e2e2" stroke="none" stroke-width="1" /><path d="M1012.500 660.500v9l6-4.500zM1019.500 660.500v9l6-4.500z" fill="#e2e2e2" stroke="none" stroke-width="1" /><path d="M1027 660.500v9" fill="none" stroke="#e2e2e2" stroke-width="1.6" /><path d="M921.300 683.500v7.500l-5-3.700zM922.900 683.500v7.500l5-3.700z" fill="#e2e2e2" stroke="none" stroke-width="1" /><path d="M998.200 686h4.500l-2.250-3zM998.200 688.500h4.500l-2.250 3z" fill="#d0d0d0" stroke="none" stroke-width="1" /><circle cx="1018.8" cy="685.3" r="5" fill="#e2e2e2" stroke="none" stroke-width="1" /><path d="M1018.800 682v3.600h3" fill="none" stroke="#333" stroke-width="1.2" /><circle cx="1024.3" cy="690.2" r="2.5" fill="#444444" stroke="#f5a800" stroke-width="2" /><path d="M1024.300 687.100v-1.300" stroke="#f5a800" stroke-width="1.500" transform="rotate(0 1024.300 690.200)"/><path d="M1024.300 687.100v-1.300" stroke="#f5a800" stroke-width="1.500" transform="rotate(45 1024.300 690.200)"/><path d="M1024.300 687.100v-1.300" stroke="#f5a800" stroke-width="1.500" transform="rotate(90 1024.300 690.200)"/><path d="M1024.300 687.100v-1.300" stroke="#f5a800" stroke-width="1.500" transform="rotate(135 1024.300 690.200)"/><path d="M1024.300 687.100v-1.300" stroke="#f5a800" stroke-width="1.500" transform="rotate(180 1024.300 690.200)"/><path d="M1024.300 687.100v-1.300" stroke="#f5a800" stroke-width="1.500" transform="rotate(225 1024.300 690.200)"/><path d="M1024.300 687.100v-1.300" stroke="#f5a800" stroke-width="1.500" transform="rotate(270 1024.300 690.200)"/><path d="M1024.300 687.100v-1.300" stroke="#f5a800" stroke-width="1.500" transform="rotate(315 1024.300 690.200)"/><path d="M1062.300 662.600v23.700M1050.500 674.500h23.700" fill="none" stroke="#dedede" stroke-width="6.2" /><circle cx="1066.7" cy="685.5" r="2.6" fill="#5c5c5c" stroke="#35b8c0" stroke-width="1.8" /><path d="M1068.700 683.700l7.600-6.300M1073.500 680l2 2.300M1075.500 678.200l1.700 2" fill="none" stroke="#35b8c0" stroke-width="1.7" /><rect x="1148.6" y="681" width="5" height="5" rx="0" fill="none" stroke="#ddd" stroke-width="1" /><circle cx="1151.1" cy="683.5" r="1" fill="#35b8c0" stroke="none" stroke-width="1" /><circle cx="1145.3" cy="683.6" r="1.4" fill="#ddd" stroke="none" stroke-width="1" /><circle cx="1156.7" cy="683.6" r="1.4" fill="#ddd" stroke="none" stroke-width="1" /><path d="M1146.300 685.500Q1146.800 691 1144.800 695M1155.700 685.500Q1155.200 691 1157.400 695" fill="none" stroke="#35b8c0" stroke-width="1.7" /><path d="M1161.3 692.3V696.3H1157.3z" fill="#d0d0d0" stroke="none" stroke-width="1" /><circle cx="1276.8" cy="662.9" r="4.5" fill="none" stroke="#e2e2e2" stroke-width="1.6" /><path d="M1273.600 666.300l-5 5.300" fill="none" stroke="#e2e2e2" stroke-width="1.9" /><rect x="1295.7" y="657.7" width="4.4" height="4.3" rx="0" fill="#3cc4c8" stroke="none" stroke-width="1" /><rect x="1300.7" y="657.7" width="4.4" height="4.3" rx="0" fill="#3cc4c8" stroke="none" stroke-width="1" /><rect x="1300.7" y="662.6" width="4.4" height="4.3" rx="0" fill="#3cc4c8" stroke="none" stroke-width="1" /><rect x="1295.7" y="662.6" width="4.4" height="4.3" rx="0" fill="#3cc4c8" stroke="none" stroke-width="1" /><circle cx="1297.5" cy="665.3" r="3.3" fill="#3cc4c8" stroke="#e2e2e2" stroke-width="1.4" /><path d="M1295 668l-4 4" fill="none" stroke="#e2e2e2" stroke-width="1.7" /><path d="M1314.500 661.500v-3h3M1325 658.500h3v3M1328 668.500v3h-3M1317.500 671.500h-3v-3" fill="none" stroke="#e2e2e2" stroke-width="1.4" /><path d="M1321 659.700l5.200 2.400v5.400l-5.200 2.600-5.200-2.600v-5.400z" fill="#3cc4c8" stroke="none" stroke-width="1" /><path d="M1316.500 662.600l4.500 2 4.500-2M1321 664.600v5" fill="none" stroke="#2a8a90" stroke-width="0.7" /><path d="M1331.8 670.3V674.3H1327.8z" fill="#d0d0d0" stroke="none" stroke-width="1" /><path d="M1345 659.300a3 1.300 0 0 1 6 0v8.400a3 1.300 0 0 1-6 0z" fill="#3cc4c8" stroke="none" stroke-width="1" /><path d="M1348 661v6" fill="none" stroke="#2a8a90" stroke-width="0.7" stroke-dasharray="1 1"/><path d="M1339.2 665.6l2.500 1.500-2.500 1.500-2.500-1.500z" fill="#cfcfcf" stroke="none" stroke-width="1" /><path d="M1343.3 668.4l2.500 1.500-2.500 1.500-2.500-1.500z" fill="#cfcfcf" stroke="none" stroke-width="1" /><path d="M1341.7 662.8l2.500 1.500-2.500 1.500-2.500-1.500z" fill="#cfcfcf" stroke="none" stroke-width="1" /><path d="M1354.8 670.3V674.3H1350.8z" fill="#d0d0d0" stroke="none" stroke-width="1" /><path d="M1270.500 680.600l10.500 6.800-10.500 6.600" fill="none" stroke="#e2e2e2" stroke-width="1.5" /><path d="M1276 684.200q-4.500 3.300 0 6.600" fill="none" stroke="#e2e2e2" stroke-width="1.3" /><path d="M1285.8 692.8V696.8H1281.8z" fill="#d0d0d0" stroke="none" stroke-width="1" /><circle cx="1297.3" cy="681.8" r="1.6" fill="#e2e2e2" stroke="none" stroke-width="1" /><path d="M1297.300 684l-.6 5-2.500 5.200M1296.700 689l3.600 5.200M1296.600 685.300l-3 2.200M1298 685.300l3.200 2.600" fill="none" stroke="#e2e2e2" stroke-width="1.6" /><path d="M1308.8 692.8V696.8H1304.8z" fill="#d0d0d0" stroke="none" stroke-width="1" /><path d="M1316 688.300a5.300 5.300 0 0 1 10.600 0z" fill="#d8d8d8" stroke="none" stroke-width="1" /><path d="M1316 688.300a5.300 5.300 0 0 1 5.300-5.300v5.300z" fill="#3cc4c8" stroke="none" stroke-width="1" /><ellipse cx="1321.5" cy="688.8" rx="8" ry="2.7" fill="none" stroke="#e2e2e2" stroke-width="1.3" transform="rotate(-28 1321.500 688.800)"/><path d="M1315 692.500q3 2 8 0" fill="none" stroke="#e2e2e2" stroke-width="1.2" /><path d="M1331.8 692.8V696.8H1327.8z" fill="#d0d0d0" stroke="none" stroke-width="1" /><rect x="1337" y="680" width="14.2" height="14.2" rx="0" fill="#d8d8d8" stroke="none" stroke-width="1" /><rect x="1339.3" y="687.3" width="5" height="5" rx="0" fill="none" stroke="#333" stroke-width="1.3" /><path d="M1343.500 688l5.500-5.500M1345 682.300h4v4" fill="none" stroke="#333" stroke-width="1.5" /></svg>
</body></html>
